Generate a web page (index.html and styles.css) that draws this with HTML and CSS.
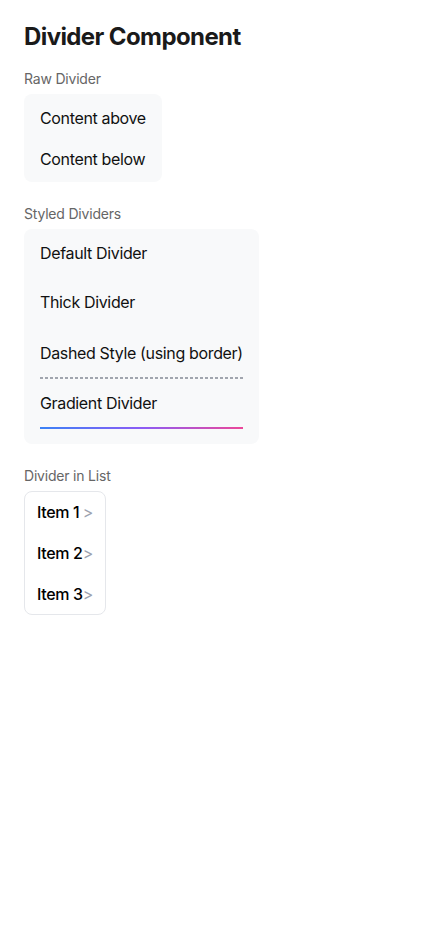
FILE: index.html
```html
<!DOCTYPE html>
<html lang="en">
<head>
<meta charset="utf-8">
<title>Divider Component</title>
<link rel="stylesheet" href="styles.css">
</head>
<body>
<main class="page">
  <h1 class="title">Divider Component</h1>

  <section class="section">
    <div class="label">Raw Divider</div>
    <div class="card card-raw">
      <div class="text">Content above</div>
      <div class="divider divider-raw"></div>
      <div class="text">Content below</div>
    </div>
  </section>

  <section class="section">
    <div class="label">Styled Dividers</div>
    <div class="card">
      <div class="text">Default Divider</div>
      <div class="divider divider-default"></div>
      <div class="text">Thick Divider</div>
      <div class="divider divider-thick"></div>
      <div class="text">Dashed Style (using border)</div>
      <div class="divider divider-dashed"></div>
      <div class="text">Gradient Divider</div>
      <div class="divider divider-gradient"></div>
    </div>
  </section>

  <section class="section">
    <div class="label">Divider in List</div>
    <div class="list">
      <div class="list-item"><span class="item-text">Item 1</span><span class="chev">&gt;</span></div>
      <div class="list-divider"></div>
      <div class="list-item"><span class="item-text">Item 2</span><span class="chev">&gt;</span></div>
      <div class="list-divider"></div>
      <div class="list-item"><span class="item-text">Item 3</span><span class="chev">&gt;</span></div>
    </div>
  </section>
</main>
</body>
</html>
```

FILE: styles.css
```css
* { box-sizing: border-box; }

html, body {
  margin: 0;
  padding: 0;
  background: #ffffff;
}

body {
  font-family: Inter, "Liberation Sans", sans-serif;
  color: #111111;
}

.page {
  padding: 24px;
  display: flex;
  flex-direction: column;
  align-items: flex-start;
}

.title {
  margin: 0 0 19px;
  font-size: 24px;
  line-height: 26px;
  font-weight: 700;
  letter-spacing: -0.6px;
  color: #1a1a1a;
}

.section {
  display: flex;
  flex-direction: column;
  align-items: flex-start;
  margin-bottom: 22px;
}

.label {
  font-size: 14px;
  line-height: 20px;
  letter-spacing: -0.2px;
  color: #666666;
  margin-bottom: 5px;
}

.card {
  background: #f8f9fa;
  border-radius: 8px;
  padding: 12px 16px;
  display: flex;
  flex-direction: column;
}

.card-raw {
  padding-bottom: 11px;
}

.text {
  font-size: 16px;
  line-height: 24px;
  letter-spacing: -0.35px;
  color: #111111;
  white-space: nowrap;
}

.divider {
  align-self: stretch;
}

.divider-raw {
  height: 1px;
  margin: 8px 0 8px;
  background: transparent;
}

.divider-default {
  height: 1px;
  margin: 12px 0;
  background: transparent;
}

.divider-thick {
  height: 3px;
  margin: 12px 0;
  background: transparent;
}

.divider-dashed {
  height: 2px;
  margin: 12px 0;
  background: repeating-linear-gradient(to right, #a1a5ae 0 3px, transparent 3px 5px);
}

.divider-gradient {
  height: 2px;
  margin: 12px 0 3px;
  background: linear-gradient(to right, #3b82f6, #8b5cf6, #ec4899);
}

.list {
  background: #ffffff;
  border: 1px solid #e5e7eb;
  border-radius: 8px;
  display: flex;
  flex-direction: column;
}

.list-item {
  display: flex;
  align-items: center;
  justify-content: space-between;
  padding: 8px 12px;
  font-size: 16px;
  line-height: 24px;
  letter-spacing: -0.35px;
}

.item-text {
  font-weight: 500;
  color: #000000;
}

.chev {
  color: #9ca3af;
}

.list-divider {
  height: 1px;
  background: transparent;
}
```
